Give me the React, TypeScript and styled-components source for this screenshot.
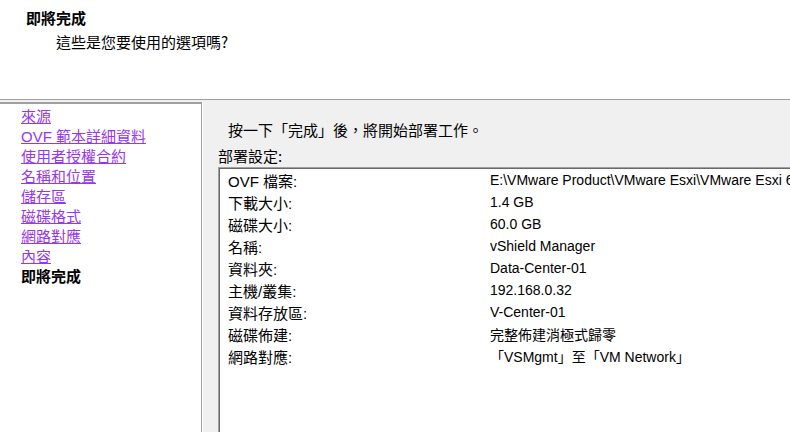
import React from 'react';
import styled, { createGlobalStyle } from 'styled-components';

const GlobalStyle = createGlobalStyle`
  html, body {
    margin: 0;
    padding: 0;
    background: #ffffff;
  }
  body {
    font-family: "Noto Sans CJK TC", "Liberation Sans", sans-serif;
    color: #000;
  }
`;

const Wizard = styled.div`
  width: 790px;
  height: 432px;
  display: flex;
  flex-direction: column;
  overflow: hidden;
`;

const Header = styled.div`
  height: 100px;
  flex-shrink: 0;
  background: #ffffff;
  border-bottom: 1px solid #a0a0a0;
  padding: 8px 0 0 26px;
  box-sizing: border-box;
`;

const Title = styled.div`
  font-size: 15px;
  font-weight: bold;
  line-height: 20px;
`;

const Subtitle = styled.div`
  font-size: 15px;
  line-height: 20px;
  margin: 4px 0 0 30px;
`;

const Body = styled.div`
  flex: 1;
  display: flex;
  background: #f0f0f0;
  min-height: 0;
`;

const Nav = styled.nav`
  width: 202px;
  flex-shrink: 0;
  margin-top: 2px;
  background: #ffffff;
  border-top: 2px solid #a0a0a0;
  border-right: 1px solid #a0a0a0;
  box-shadow: 1px 0 0 #ffffff;
  padding: 3px 0 0 21px;
  box-sizing: border-box;
  display: flex;
  flex-direction: column;
`;

const NavItem = styled.a<{ $current?: boolean }>`
  font-size: 15px;
  line-height: 20px;
  white-space: nowrap;
  color: ${(p) => (p.$current ? '#000' : '#9636ee')};
  font-weight: ${(p) => (p.$current ? 'bold' : 'normal')};
  text-decoration: ${(p) => (p.$current ? 'none' : 'underline')};
  font-family: "Liberation Sans", "Noto Sans CJK TC", sans-serif;
`;

const Content = styled.div`
  flex: 1;
  min-width: 0;
  padding: 20px 0 0 16px;
  display: flex;
  flex-direction: column;
`;

const Intro = styled.div`
  font-size: 15px;
  line-height: 20px;
  padding-left: 10px;
`;

const SectionLabel = styled.div`
  font-size: 15px;
  line-height: 20px;
  margin-top: 6px;
`;

const SettingsBox = styled.div`
  flex: 1;
  margin: 1px 0 0 0;
  background: #ffffff;
  border-top: 1px solid #a0a0a0;
  border-left: 1px solid #a0a0a0;
  box-shadow: inset 1px 1px 0 #696969;
  padding: 1px 0 0 9px;
  display: flex;
  flex-direction: column;
`;

const Row = styled.div`
  display: grid;
  grid-template-columns: 262px 1fr;
  height: 22px;
  align-items: center;
  font-size: 14px;
  white-space: nowrap;
`;

const Label = styled.span`
  font-size: 15px;
  font-family: "Liberation Sans", "Noto Sans CJK TC", sans-serif;
`;

const Value = styled.span`
  font-family: "Liberation Sans", "Noto Sans CJK TC", sans-serif;
  overflow: hidden;
`;

const steps = [
  '來源',
  'OVF 範本詳細資料',
  '使用者授權合約',
  '名稱和位置',
  '儲存區',
  '磁碟格式',
  '網路對應',
  '內容',
];

const settings: [string, string][] = [
  ['OVF 檔案:', 'E:\\VMware Product\\VMware Esxi\\VMware Esxi 6.0'],
  ['下載大小:', '1.4 GB'],
  ['磁碟大小:', '60.0 GB'],
  ['名稱:', 'vShield Manager'],
  ['資料夾:', 'Data-Center-01'],
  ['主機/叢集:', '192.168.0.32'],
  ['資料存放區:', 'V-Center-01'],
  ['磁碟佈建:', '完整佈建消極式歸零'],
  ['網路對應:', '「VSMgmt」至「VM Network」'],
];

const App: React.FC = () => {
  return (
    <>
      <GlobalStyle />
      <Wizard>
        <Header>
          <Title>即將完成</Title>
          <Subtitle>這些是您要使用的選項嗎?</Subtitle>
        </Header>
        <Body>
          <Nav>
            {steps.map((step) => (
              <NavItem key={step} href="#">
                {step}
              </NavItem>
            ))}
            <NavItem $current>即將完成</NavItem>
          </Nav>
          <Content>
            <Intro>按一下「完成」後，將開始部署工作。</Intro>
            <SectionLabel>部署設定:</SectionLabel>
            <SettingsBox>
              {settings.map(([label, value]) => (
                <Row key={label}>
                  <Label>{label}</Label>
                  <Value>{value}</Value>
                </Row>
              ))}
            </SettingsBox>
          </Content>
        </Body>
      </Wizard>
    </>
  );
};

export default App;
